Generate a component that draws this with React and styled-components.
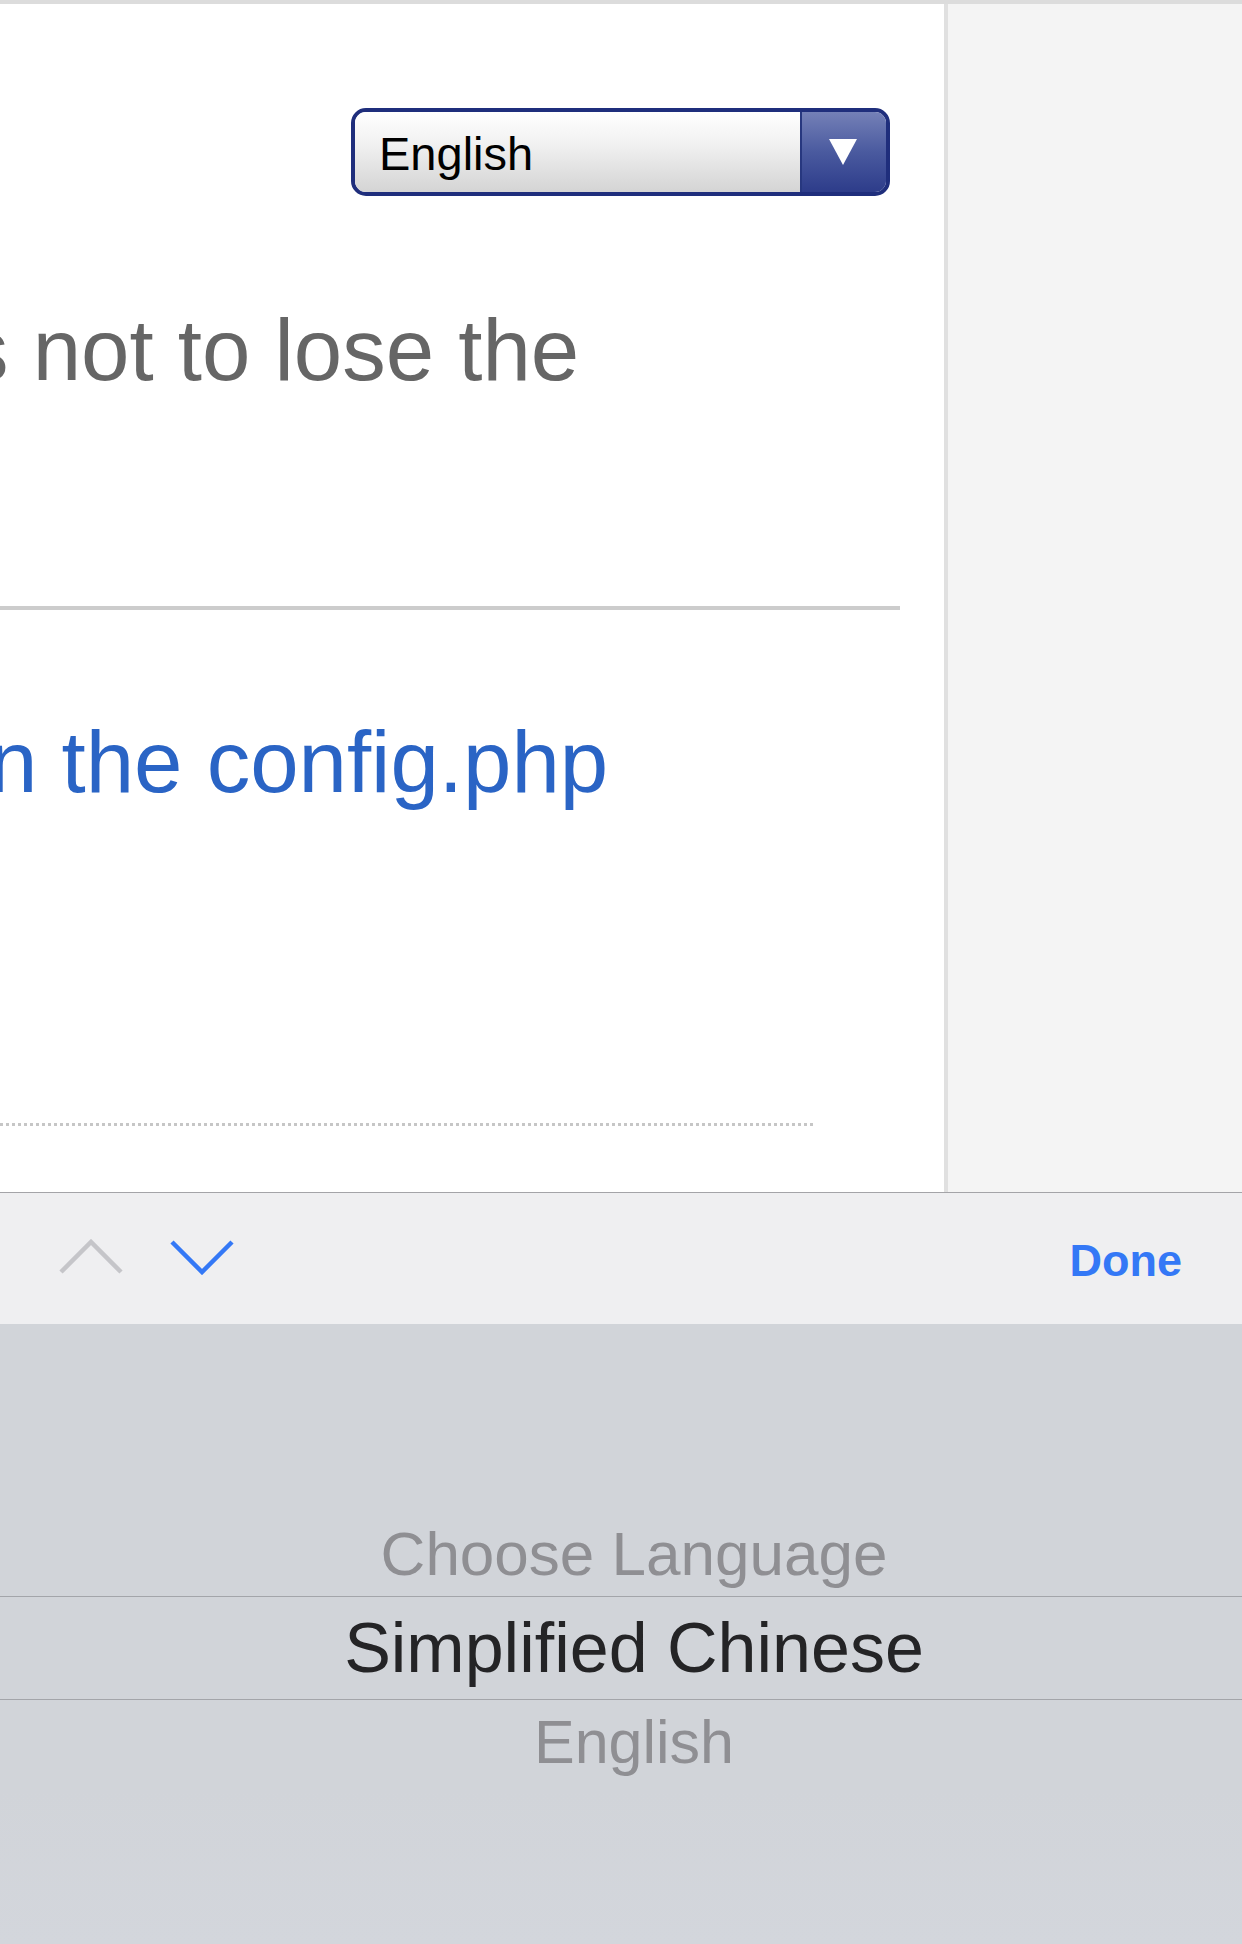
import React from 'react'
import styled, { createGlobalStyle } from 'styled-components'

const GlobalStyle = createGlobalStyle`
  html, body {
    margin: 0;
    padding: 0;
  }
  body {
    background: #f4f4f4;
    font-family: "Liberation Sans", Arial, Helvetica, sans-serif;
  }
`

const Screen = styled.div`
  width: 1242px;
  height: 1944px;
  display: flex;
  flex-direction: column;
  overflow: hidden;
`

const TopStrip = styled.div`
  height: 4px;
  flex-shrink: 0;
  background: #dcdcdc;
`

const PageArea = styled.div`
  display: flex;
  height: 1188px;
  flex-shrink: 0;
  background: #f4f4f4;
`

const Panel = styled.main`
  width: 944px;
  border-right: 4px solid #e0e0e0;
  background: #fff;
  display: flex;
  flex-direction: column;
  overflow: hidden;
`

const SelectRow = styled.div`
  display: flex;
  justify-content: flex-end;
  padding: 104px 54px 0 0;
`

const Select = styled.div`
  width: 539px;
  height: 88px;
  box-sizing: border-box;
  border: 4px solid #1f2e7c;
  border-radius: 15px;
  overflow: hidden;
  display: flex;
`

const SelectValue = styled.div`
  flex: 1;
  display: flex;
  align-items: center;
  padding: 2px 0 0 24px;
  background: linear-gradient(to bottom, #ffffff 0%, #f1f1f1 40%, #d4d4d4 100%);
  color: #000;
  font-size: 47px;
`

const SelectArrow = styled.div`
  width: 81px;
  border-left: 2px solid #27377f;
  background: linear-gradient(to bottom, #7480b7 0%, #4a5a9f 50%, #2d3c8a 100%);
  display: flex;
  align-items: center;
  justify-content: center;
  padding-right: 3px;

  &::after {
    content: '';
    width: 0;
    height: 0;
    border-left: 14px solid transparent;
    border-right: 14px solid transparent;
    border-top: 26px solid #fff;
  }
`

const Para = styled.p`
  margin: ${p => p.$top}px 0 0 ${p => p.$shift}px;
  font-size: 87px;
  line-height: 100px;
  white-space: nowrap;
  color: ${p => (p.$link ? '#2a64c5' : '#666')};
`

const Rule = styled.div`
  margin-top: 206px;
  width: 900px;
  height: 4px;
  flex-shrink: 0;
  background: #cccccc;
`

const DottedRule = styled.div`
  margin-top: 311px;
  width: 813px;
  height: 3px;
  flex-shrink: 0;
  background: repeating-linear-gradient(to right, #c6c6c6 0 3px, transparent 3px 6px);
`

const Side = styled.aside`
  flex: 1;
`

const Toolbar = styled.div`
  height: 131px;
  flex-shrink: 0;
  border-top: 1px solid #a4a4a8;
  background: #efeff1;
  display: flex;
  align-items: center;
  padding: 0 60px 0 59px;
`

const Nav = styled.div`
  display: flex;
  gap: 47px;
  margin-top: -3px;
`

const Done = styled.span`
  margin: 4px 0 0 auto;
  font-size: 45px;
  font-weight: 700;
  color: #3478f6;
`

const Picker = styled.div`
  flex: 1;
  background: linear-gradient(to bottom, #d1d4d9 0%, #d1d4d9 75%, #d3d6dc 100%);
  padding-top: 188px;
  display: flex;
  flex-direction: column;
`

const Option = styled.div`
  height: ${p => (p.$selected ? 102 : 84)}px;
  line-height: ${p => (p.$selected ? 102 : 84)}px;
  padding-left: 26px;
  text-align: center;
  white-space: nowrap;
  font-size: ${p => p.$size}px;
  color: ${p => (p.$selected ? '#242426' : '#8f8f93')};
  border-top: ${p => (p.$selected ? '1px solid #a3a5aa' : 'none')};
  border-bottom: ${p => (p.$selected ? '1px solid #a3a5aa' : 'none')};
`

function Chevron({ up, color }) {
  const points = up ? '2,33 32,3 62,33' : '2,3 32,33 62,3'
  return (
    <svg width="64" height="36" viewBox="0 0 64 36">
      <polyline points={points} fill="none" stroke={color} strokeWidth="4.5" />
    </svg>
  )
}

export default function App() {
  return (
    <Screen>
      <GlobalStyle />
      <TopStrip />
      <PageArea>
        <Panel>
          <SelectRow>
            <Select>
              <SelectValue>English</SelectValue>
              <SelectArrow />
            </Select>
          </SelectRow>
          <Para $top={104} $shift={-35}>s not to lose the</Para>
          <Rule />
          <Para $top={102} $shift={-11} $link>n the config.php</Para>
          <DottedRule />
        </Panel>
        <Side />
      </PageArea>
      <Toolbar>
        <Nav>
          <Chevron up color="#c5c5c9" />
          <Chevron color="#3478f6" />
        </Nav>
        <Done>Done</Done>
      </Toolbar>
      <Picker>
        <Option $size={62}>Choose Language</Option>
        <Option $size={70} $selected>Simplified Chinese</Option>
        <Option $size={61}>English</Option>
      </Picker>
    </Screen>
  )
}
